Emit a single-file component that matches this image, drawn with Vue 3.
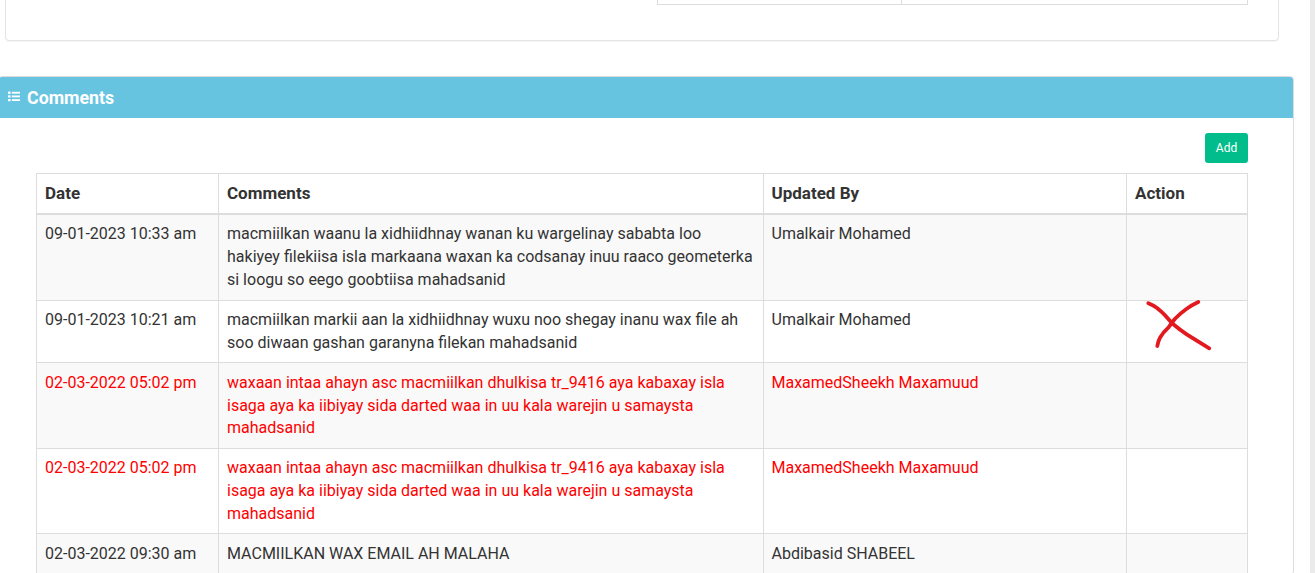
<script setup>
const rows = [
  { date: '09-01-2023 10:33 am', text: 'macmiilkan waanu la xidhiidhnay wanan ku wargelinay sababta loo hakiyey filekiisa isla markaana waxan ka codsanay inuu raaco geometerka si loogu so eego goobtiisa mahadsanid', by: 'Umalkair Mohamed' },
  { date: '09-01-2023 10:21 am', text: 'macmiilkan markii aan la xidhiidhnay wuxu noo shegay inanu wax file ah soo diwaan gashan garanyna filekan mahadsanid', by: 'Umalkair Mohamed', cross: true },
  { date: '02-03-2022 05:02 pm', text: 'waxaan intaa ahayn asc macmiilkan dhulkisa tr_9416 aya kabaxay isla isaga aya ka iibiyay sida darted waa in uu kala warejin u samaysta mahadsanid', by: 'MaxamedSheekh Maxamuud', red: true },
  { date: '02-03-2022 05:02 pm', text: 'waxaan intaa ahayn asc macmiilkan dhulkisa tr_9416 aya kabaxay isla isaga aya ka iibiyay sida darted waa in uu kala warejin u samaysta mahadsanid', by: 'MaxamedSheekh Maxamuud', red: true },
  { date: '02-03-2022 09:30 am', text: 'MACMIILKAN WAX EMAIL AH MALAHA', by: 'Abdibasid SHABEEL' }
]
</script>

<template>
  <div class="page">
    <main class="main">
      <section class="top-card">
        <div class="top-table">
          <div class="top-cell first"></div>
          <div class="top-cell"></div>
        </div>
      </section>

      <section class="panel">
        <header class="panel-head">
          <svg class="list-icon" width="12" height="11" viewBox="0 0 12 11" fill="#fff" aria-hidden="true">
            <rect x="0" y="0.5" width="2.6" height="2.4" rx="0.6" />
            <rect x="0" y="4.2" width="2.6" height="2.4" rx="0.6" />
            <rect x="0" y="7.9" width="2.6" height="2.4" rx="0.6" />
            <rect x="3.8" y="0.8" width="8.2" height="1.8" />
            <rect x="3.8" y="4.5" width="8.2" height="1.8" />
            <rect x="3.8" y="8.2" width="8.2" height="1.8" />
          </svg>
          <span class="panel-title">Comments</span>
        </header>
        <div class="panel-body">
          <div class="toolbar"><button class="add" type="button">Add</button></div>
          <table class="grid">
            <colgroup>
              <col class="c1" />
              <col class="c2" />
              <col class="c3" />
              <col class="c4" />
            </colgroup>
            <thead>
              <tr>
                <th>Date</th>
                <th>Comments</th>
                <th>Updated By</th>
                <th>Action</th>
              </tr>
            </thead>
            <tbody>
              <tr v-for="(r, i) in rows" :key="i" :class="{ red: r.red, odd: i % 2 === 0 }">
                <td>{{ r.date }}</td>
                <td>{{ r.text }}</td>
                <td>{{ r.by }}</td>
                <td class="action">
                  <svg v-if="r.cross" class="cross" width="70" height="54" viewBox="0 0 70 54" fill="none" stroke="#e2191f" stroke-width="3.8" stroke-linecap="round" stroke-linejoin="round" aria-hidden="true">
                    <path d="M4.300 4.300 Q9 6.200 12.700 8.700 Q17 12 21 16.300 Q25 21 29.300 25.300 Q36 31 42.700 35.300 L56 43.700 L65.300 49.300" />
                    <path d="M54.300 3 Q48 6 42.700 9.700 Q36 14.500 31 19.700 Q27.500 24 24.300 28.700 Q19 33.500 16 38.700 Q14.300 42 13.300 47" />
                  </svg>
                </td>
              </tr>
            </tbody>
          </table>
        </div>
      </section>
    </main>
    <div class="scrollbar"></div>
  </div>
</template>

<style>
html, body { margin: 0; overflow: hidden; background: #fff; }
</style>

<style scoped>
.page {
  display: flex;
  height: 573px;
  overflow: hidden;
  font-family: Roboto, "Liberation Sans", sans-serif;
  font-size: 16px;
  line-height: 22.86px;
  color: #333;
  background: #fff;
}
.main { flex: 1; min-width: 0; }
.scrollbar { width: 5px; background: #ebebeb; }

.top-card {
  box-sizing: border-box;
  display: flex;
  justify-content: flex-end;
  align-items: flex-start;
  height: 61px;
  width: 1274px;
  margin: -20px 0 35px 5px;
  padding-right: 30px;
  background: #fff;
  border: 1px solid #e4e4e4;
  border-radius: 4px;
  box-shadow: 0 1px 1px rgba(0, 0, 0, 0.04);
}
.top-table {
  display: flex;
  box-sizing: border-box;
  width: 591px;
  height: 24px;
  border: 1px solid #ddd;
  border-top: 0;
}
.top-cell { flex: 1; }
.top-cell.first { flex: 0 0 243px; border-right: 1px solid #ddd; }

.panel {
  box-sizing: border-box;
  width: 1296px;
  margin-left: -2px;
  background: #fff;
  border: 1px solid #ddd;
  border-radius: 4px;
}
.panel-head {
  display: flex;
  align-items: center;
  height: 41px;
  padding-left: 9px;
  background: #67c4e0;
  color: #fff;
  border-radius: 3px 3px 0 0;
}
.list-icon { margin: -3px 7px 0 0; }
.panel-title { font-size: 17.8px; font-weight: 700; padding-top: 1px; }

.panel-body { padding: 15px 45px 0 37px; }
.toolbar { display: flex; justify-content: flex-end; margin-bottom: 10px; }
.add {
  width: 43px;
  height: 30px;
  padding: 0;
  border: 0;
  border-radius: 3px;
  background: #00bd8b;
  color: #fff;
  font: 12px/18px Roboto, "Liberation Sans", sans-serif;
}

.grid {
  width: 1211px;
  table-layout: fixed;
  border-collapse: collapse;
  border: 1px solid #ddd;
}
.c1 { width: 182px; }
.c2 { width: 544.5px; }
.c3 { width: 363.5px; }
.c4 { width: 121px; }
.grid th, .grid td {
  text-align: left;
  vertical-align: top;
  border: 1px solid #ddd;
}
.grid th { padding: 8px; font-size: 17px; line-height: 23px; font-weight: 700; border-bottom-width: 2px; }
.grid td { padding: 8.4px 8px 7.6px; }
.grid tr.odd td { background: #f9f9f9; }
.grid tr.red td { color: #f00; }
.action { position: relative; }
.cross { position: absolute; left: 17px; top: -2px; }
</style>
